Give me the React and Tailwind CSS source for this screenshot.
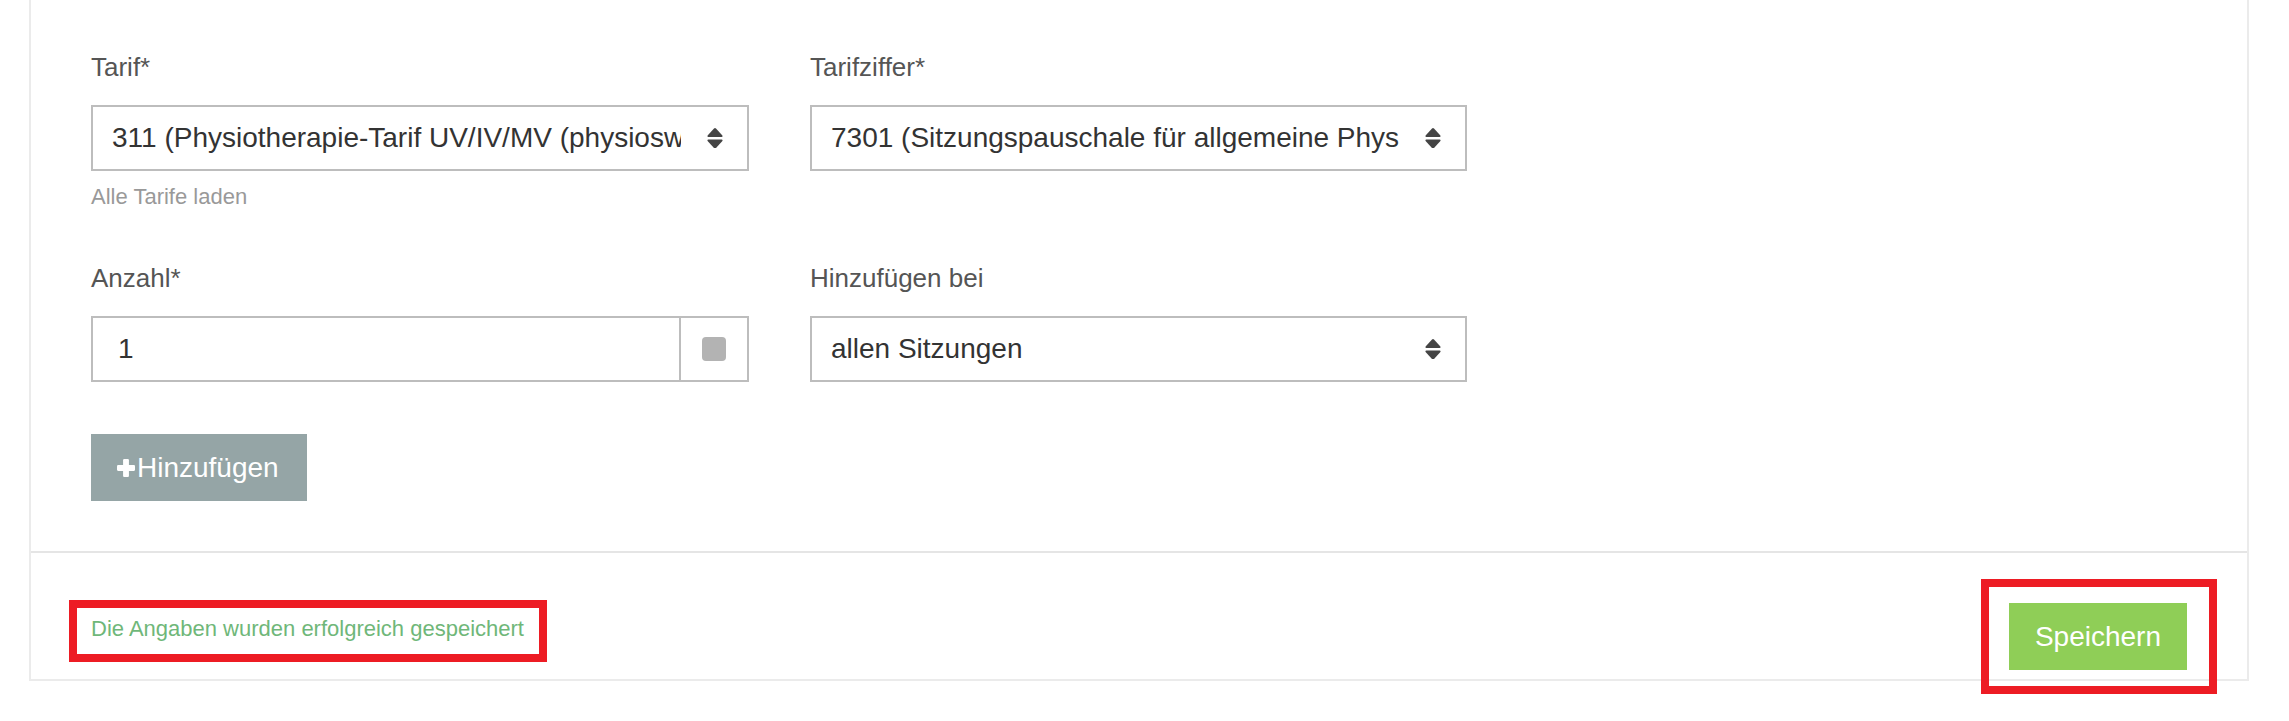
import React from "react";

function SortIcon() {
  return (
    <svg width="16" height="20" viewBox="0 0 16 20" className="shrink-0 ml-[26px]">
      <path d="M7 0.6 Q8 -0.4 9 0.6 L15.4 7.6 Q16 9 14.6 9 L1.4 9 Q0 9 0.6 7.6 Z" fill="#444" />
      <path d="M1.4 11.5 L14.6 11.5 Q16 11.5 15.4 12.9 L9 19.9 Q8 20.9 7 19.9 L0.6 12.9 Q0 11.5 1.4 11.5 Z" fill="#444" />
    </svg>
  );
}

function Select({ value }) {
  return (
    <div className="h-[66px] w-full flex items-center border-2 border-[#bdbdbd] bg-white pl-[19px] pr-[24px]">
      <span className="flex-1 min-w-0 overflow-hidden whitespace-nowrap text-[28px] text-[#333]">
        {value}
      </span>
      <SortIcon />
    </div>
  );
}

function Label({ children }) {
  return (
    <div className="h-[34px] leading-[34px] text-[26px] text-[#555] mb-[21px]">
      {children}
    </div>
  );
}

export default function App() {
  return (
    <div className="relative min-h-screen bg-white font-['Liberation_Sans',Arial,sans-serif]">
      <div className="ml-[29px] w-[2220px] border-2 border-t-0 border-[#ebebeb]">
        <div className="px-[60px] pt-[50px] pb-[50px]">
          <div className="flex gap-[61px]">
            <div className="w-[658px]">
              <Label>Tarif*</Label>
              <Select value="311 (Physiotherapie-Tarif UV/IV/MV (physioswiss))" />
              <div className="mt-[11px] h-[30px] leading-[30px] text-[22px] text-[#999]">
                Alle Tarife laden
              </div>
            </div>
            <div className="w-[657px]">
              <Label>Tarifziffer*</Label>
              <Select value="7301 (Sitzungspauschale für allgemeine Physiotherapie)" />
            </div>
          </div>

          <div className="flex gap-[61px] mt-[49px]">
            <div className="w-[658px]">
              <Label>Anzahl*</Label>
              <div className="h-[66px] flex border-2 border-[#bdbdbd]">
                <div className="flex-1 flex items-center pl-[25px] text-[28px] text-[#333]">1</div>
                <div className="w-[68px] border-l-2 border-[#bdbdbd] flex items-center justify-center">
                  <div className="w-[24px] h-[24px] rounded-[4px] bg-[#b3b3b3]" />
                </div>
              </div>
            </div>
            <div className="w-[657px]">
              <Label>Hinzufügen bei</Label>
              <Select value="allen Sitzungen" />
            </div>
          </div>

          <button className="mt-[52px] h-[67px] w-[216px] px-[26px] flex items-center gap-[2px] bg-[#95a5a6] text-white text-[28px]">
            <svg width="18" height="18" viewBox="0 0 16 16" className="shrink-0">
              <rect x="5.4" y="0" width="5.2" height="16" rx="1" fill="#fff" />
              <rect x="0" y="5.4" width="16" height="5.2" rx="1" fill="#fff" />
            </svg>
            Hinzufügen
          </button>
        </div>

        <div className="border-t-2 border-[#e5e5e5] px-[60px] pt-[50px] pb-[9px] flex justify-between items-start">
          <div className="mt-[11px] h-[30px] leading-[30px] text-[22px] text-[#6fb779]">
            Die Angaben wurden erfolgreich gespeichert
          </div>
          <button className="h-[67px] px-[26px] bg-[#8fce57] text-white text-[28px]">
            Speichern
          </button>
        </div>
      </div>

      <div className="absolute left-[69px] top-[600px] w-[478px] h-[62px] border-[8px] border-[#ed1c24] pointer-events-none" />
      <div className="absolute left-[1981px] top-[579px] w-[236px] h-[115px] border-[8px] border-[#ed1c24] pointer-events-none" />
    </div>
  );
}
